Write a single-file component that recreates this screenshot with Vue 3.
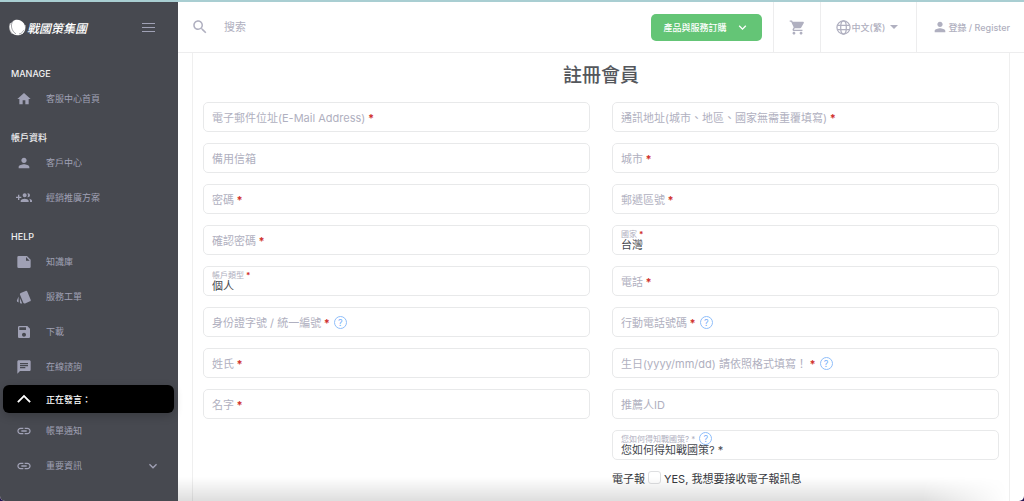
<script setup>
const paths = {
  home: 'M10 20v-6h4v6h5v-8h3L12 3 2 12h3v8z',
  person: 'M12 12c2.21 0 4-1.79 4-4s-1.79-4-4-4-4 1.79-4 4 1.79 4 4 4zm0 2c-2.67 0-8 1.34-8 4v2h16v-2c0-2.66-5.33-4-8-4z',
  groupAdd: 'M8 10H5V7H3v3H0v2h3v3h2v-3h3v-2zm10 1c1.66 0 2.99-1.34 2.99-3S19.66 5 18 5c-.32 0-.63.05-.91.14.57.81.9 1.79.9 2.86s-.34 2.04-.9 2.86c.28.09.59.14.91.14zm-5 0c1.66 0 2.99-1.34 2.99-3S14.66 5 13 5c-1.66 0-3 1.34-3 3s1.34 3 3 3zm6.62 2.16c.83.73 1.38 1.66 1.38 2.84v2h3v-2c0-1.54-2.37-2.49-4.38-2.84zM13 13c-2 0-6 1-6 3v2h12v-2c0-2-4-3-6-3z',
  note: 'M4 3h12.500l5.500 5.500V19a2 2 0 0 1-2 2H4a2 2 0 0 1-2-2V5a2 2 0 0 1 2-2zM15 4.500V10h5.500z',
  style: 'M2.53 19.65l1.34.56v-9.03l-2.43 5.86c-.41 1.02.08 2.19 1.09 2.61zm19.5-3.7L17.07 3.98c-.31-.75-1.04-1.21-1.81-1.23-.26 0-.53.04-.79.15L7.1 5.95c-.75.31-1.21 1.03-1.23 1.8-.01.27.04.54.15.8l4.96 11.97c.31.76 1.05 1.22 1.83 1.23.26 0 .52-.05.77-.15l7.36-3.05c1.02-.42 1.51-1.59 1.09-2.6zM5.88 19.75c0 1.1.9 2 2 2h1.45l-3.45-8.34v6.34z',
  save: 'M17 3H5c-1.11 0-2 .9-2 2v14c0 1.1.89 2 2 2h14c1.1 0 2-.9 2-2V7l-4-4zm-5 16c-1.66 0-3-1.34-3-3s1.34-3 3-3 3 1.34 3 3-1.34 3-3 3zm3-10H5V5h10v4z',
  chat: 'M20 2H4c-1.1 0-1.99.9-1.99 2L2 22l4-4h14c1.1 0 2-.9 2-2V4c0-1.1-.9-2-2-2zM6 9h12v2H6V9zm8 5H6v-2h8v2zm4-6H6V6h12v2z',
  link: 'M3.9 12c0-1.71 1.39-3.1 3.1-3.1h4V7H7c-2.76 0-5 2.24-5 5s2.24 5 5 5h4v-1.9H7c-1.71 0-3.1-1.39-3.1-3.1zM8 13h8v-2H8v2zm9-6h-4v1.9h4c1.71 0 3.1 1.39 3.1 3.1s-1.39 3.1-3.1 3.1h-4V17h4c2.76 0 5-2.24 5-5s-2.24-5-5-5z',
  up: 'M12 5.500L1.800 15.700l2 2L12 9.500l8.200 8.200 2-2z',
  search: 'M15.5 14h-.79l-.28-.27C15.41 12.59 16 11.11 16 9.5 16 5.91 13.09 3 9.5 3S3 5.91 3 9.5 5.91 16 9.5 16c1.61 0 3.09-.59 4.23-1.57l.27.28v.79l5 4.99L20.49 19l-4.99-5zm-6 0C7.01 14 5 11.99 5 9.5S7.01 5 9.5 5 14 7.010 14 9.500 11.990 14 9.500 14z',
  cart: 'M7 18c-1.100 0-1.990.9-1.990 2S5.900 22 7 22s2-.9 2-2-.9-2-2-2zM1 2v2h2l3.600 7.590-1.350 2.450c-.16.28-.25.61-.25.96 0 1.100.9 2 2 2h12v-2H7.420c-.14 0-.25-.11-.25-.25l.03-.12.9-1.630h7.450c.75 0 1.410-.41 1.750-1.030l3.580-6.490c.08-.14.12-.31.12-.48 0-.55-.45-1-1-1H5.210l-.94-2H1zm16 16c-1.100 0-1.990.9-1.990 2s.89 2 1.990 2 2-.9 2-2-.9-2-2-2z',
  chevron: 'M7.410 8.590L12 13.170l4.590-4.580L18 10l-6 6-6-6z',
  caret: 'M6 9l6 6 6-6z'
}

const groups = [
  { title: 'MANAGE', items: [{ text: '客服中心首頁', icon: 'home' }] },
  {
    title: '帳戶資料',
    items: [
      { text: '客戶中心', icon: 'person' },
      { text: '經銷推廣方案', icon: 'groupAdd' }
    ]
  },
  {
    title: 'HELP',
    items: [
      { text: '知識庫', icon: 'note' },
      { text: '服務工單', icon: 'style' },
      { text: '下載', icon: 'save' },
      { text: '在線諮詢', icon: 'chat' },
      { text: '正在發言：', icon: 'up', active: true },
      { text: '帳單通知', icon: 'link' },
      { text: '重要資訊', icon: 'link', more: true }
    ]
  }
]

const columns = [
  [
    { id: 'email', label: '電子郵件位址(E-Mail Address)', req: true, type: 'email' },
    { id: 'email2', label: '備用信箱', type: 'email' },
    { id: 'pw', label: '密碼', req: true, type: 'password' },
    { id: 'pw2', label: '確認密碼', req: true, type: 'password' },
    { id: 'kind', label: '帳戶類型', req: true, value: '個人' },
    { id: 'taxid', label: '身份證字號 / 統一編號', req: true, help: true },
    { id: 'last', label: '姓氏', req: true },
    { id: 'first', label: '名字', req: true }
  ],
  [
    { id: 'addr', label: '通訊地址(城市、地區、國家無需重覆填寫)', req: true },
    { id: 'city', label: '城市', req: true },
    { id: 'zip', label: '郵遞區號', req: true },
    { id: 'country', label: '國家', req: true, value: '台灣' },
    { id: 'tel', label: '電話', req: true, type: 'tel' },
    { id: 'mobile', label: '行動電話號碼', req: true, help: true, type: 'tel' },
    { id: 'birth', label: '生日(yyyy/mm/dd) 請依照格式填寫！', req: true, help: true },
    { id: 'ref', label: '推薦人ID' },
    { id: 'how', label: '您如何得知戰國策? *', help: true, value: '您如何得知戰國策? *' }
  ]
]
</script>

<template>
  <div class="page">
    <aside class="sidebar">
      <div class="brand">
        <a href="#" class="logo">
          <svg class="mark" viewBox="0 0 34 34" aria-hidden="true">
            <path fill="#fff" d="M7 5C13-1 25 1 30 9c5 9 1 20-8 23-9 2-16-1-19-9C0 16 2 9 7 5z" />
            <path fill="none" stroke="#474950" stroke-width="1" d="M8 4C2 12 5 24 14 30M30 22c-3 5-6 7-10 8" />
            <path fill="none" stroke="#fff" stroke-width="1.500" d="M3 8C0 15 1 24 7 30M32 12c1 7-1 13-6 18" />
          </svg>
          <span>戰國策集團</span>
        </a>
        <button class="burger" aria-label="選單"><i></i><i></i><i></i></button>
      </div>
      <nav>
        <section v-for="g in groups" :key="g.title">
          <h2>{{ g.title }}</h2>
          <a v-for="item in g.items" :key="item.text" href="#" class="item" :class="{ active: item.active }">
            <svg class="icon" viewBox="0 0 24 24"><path fill-rule="evenodd" :d="paths[item.icon]" /></svg>
            <span>{{ item.text }}</span>
            <svg v-if="item.more" class="icon more" viewBox="0 0 24 24"><path :d="paths.chevron" /></svg>
          </a>
        </section>
      </nav>
    </aside>

    <div class="main">
      <header>
        <label class="search">
          <svg class="icon large" viewBox="0 0 24 24"><path :d="paths.search" /></svg>
          <input type="search" placeholder="搜索" aria-label="搜索" />
        </label>
        <button class="order">
          <span>產品與服務訂購</span>
          <svg viewBox="0 0 24 24"><path :d="paths.chevron" /></svg>
        </button>
        <a href="#" class="cell cart" aria-label="購物車">
          <svg class="icon" viewBox="0 0 24 24"><path :d="paths.cart" /></svg>
        </a>
        <button class="cell lang">
          <svg class="globe" viewBox="0 0 24 24">
            <circle cx="12" cy="12" r="10.500" />
            <ellipse cx="12" cy="12" rx="4.500" ry="10.500" />
            <path d="M2.500 8.500h19M2.500 15.500h19" />
          </svg>
          <span>中文(繁)</span>
          <svg class="icon" viewBox="0 0 24 24"><path :d="paths.caret" /></svg>
        </button>
        <a href="#" class="cell login">
          <svg class="icon" viewBox="0 0 24 24"><path :d="paths.person" /></svg>
          <span>登錄 / Register</span>
        </a>
      </header>

      <main class="card">
        <h1>註冊會員</h1>
        <form @submit.prevent>
          <div v-for="(col, i) in columns" :key="i" class="column">
            <div v-for="f in col" :key="f.id" class="field" :class="{ filled: f.value }">
              <select v-if="f.value" :id="f.id"><option>{{ f.value }}</option></select>
              <input v-else :id="f.id" :type="f.type || 'text'" />
              <div class="caption">
                <label :for="f.id">{{ f.label }}<b v-if="f.req"> *</b></label>
                <button v-if="f.help" type="button" class="help" aria-label="說明">?</button>
              </div>
            </div>
            <div v-if="i === 1" class="news">
              <span>電子報</span>
              <input id="news" type="checkbox" />
              <label for="news">YES, 我想要接收電子報訊息</label>
            </div>
          </div>
        </form>
      </main>
    </div>
  </div>
</template>

<style>
html { background: #241453; }
</style>

<style scoped>
* { box-sizing: border-box; }
.page {
  display: flex;
  height: 100vh;
  overflow: hidden;
  border-top: 2px solid #a9ced2;
  border-radius: 0 0 5px 5px;
  background: #fff;
  color: #45484e;
  font-family: Inter, "Noto Sans CJK TC", sans-serif;
  font-size: 11px;
}
a { color: inherit; text-decoration: none; }
button { font: inherit; color: inherit; border: 0; background: none; padding: 0; cursor: pointer; }
.icon { width: 16px; height: 16px; fill: currentColor; flex: none; }

.sidebar { flex: none; width: 178px; background: #474950; color: #a0a1b5; }
.brand { display: flex; align-items: center; justify-content: space-between; height: 50px; padding: 0 23px 0 9px; }
.logo { display: flex; align-items: center; gap: 1px; color: #fff; font-size: 12px; font-weight: 500; font-style: italic; }
.mark { width: 17px; height: 17px; }
.burger { display: flex; flex-direction: column; gap: 3px; width: 13px; }
.burger i { height: 1px; background: #a0a1b5; }
h2 { margin: 0; height: 29px; padding: 14px 0 0 11px; font-size: 9px; line-height: 16px; font-weight: 500; color: #f0f0f2; }
.item { display: flex; align-items: center; gap: 14px; height: 35px; padding: 0 17px 0 16px; font-size: 9px; }
.item span { flex: 1; }
.item.active {
  height: 28px;
  margin: 1px 4px 0 3px;
  padding: 0 13px;
  border-radius: 6px;
  background: #000;
  color: #fff;
  font-weight: 500;
  box-shadow: 0 3px 10px rgba(0, 0, 0, .2);
}

.main { position: relative; flex: 1; min-width: 0; display: flex; flex-direction: column; }
.main::after {
  content: "";
  position: absolute;
  left: 0;
  right: 0;
  bottom: 0;
  height: 24px;
  background: linear-gradient(rgba(0, 0, 0, 0), rgba(0, 0, 0, .13));
  mask-image: linear-gradient(90deg, #000 88%, transparent 98%);
  pointer-events: none;
}
header { flex: none; display: flex; align-items: center; height: 51px; border-bottom: 1px solid #ededee; color: #b0b0c0; }
.search { flex: 1; min-width: 0; display: flex; align-items: center; gap: 15px; padding-left: 13px; }
.large { width: 18px; height: 18px; }
.search input { flex: 1; min-width: 0; border: 0; padding: 0; outline: 0; background: none; font: inherit; }
.search input::placeholder { color: #b0b0c0; }
.order { display: flex; align-items: center; gap: 9px; height: 27px; margin-right: 11px; padding: 0 12px; border-radius: 5px; background: #64c576; color: #fff; font-size: 9px; font-weight: 500; }
.order svg { width: 15px; height: 15px; fill: currentColor; }
.cell { display: flex; align-items: center; justify-content: center; height: 50px; border-left: 1px solid #ededee; font-size: 9px; font-weight: 500; }
.cart { width: 47px; }
.cart .icon { width: 17px; height: 17px; }
.lang { width: 96px; gap: 1px; }
.globe { width: 15px; height: 15px; fill: none; stroke: #b0b0c0; stroke-width: 2; }
.login { padding: 0 14px 0 15px; }

.card { flex: 1; margin: 0 14px; padding: 0 10px; border: solid #efefef; border-width: 0 1px; }
h1 { margin: 0; padding: 9px 0 12px; font-size: 19px; line-height: 28px; font-weight: 500; text-align: center; color: #54575c; }
form { display: grid; grid-template-columns: 1fr 1fr; gap: 22px; }
.column { display: flex; flex-direction: column; gap: 11px; }
.field { position: relative; height: 30px; }
.field > input, .field > select {
  appearance: none;
  display: block;
  width: 100%;
  height: 30px;
  padding: 0 8px;
  border: 1px solid #e8e9ea;
  border-radius: 5px;
  outline: 0;
  background: #fff;
  color: #45484e;
  font: inherit;
}
.field > select { padding-top: 9px; }
.caption { position: absolute; left: 9px; top: 0; height: 30px; display: flex; align-items: center; gap: 4px; color: #b0b0c0; }
.filled .caption { top: 1px; height: 14px; font-size: 8px; }
.caption b { color: #d0312d; font-weight: 700; }
.help { width: 13px; height: 13px; border: 1px solid #8fbefa; border-radius: 50%; color: #78affa; font-size: 9px; line-height: 11px; text-align: center; }
.news { display: flex; align-items: center; gap: 3px; height: 13px; color: #37393e; }
.news input { appearance: none; width: 13px; height: 13px; margin: 0; border: 1px solid #dedfe1; border-radius: 3px; background: #fff; }
</style>
